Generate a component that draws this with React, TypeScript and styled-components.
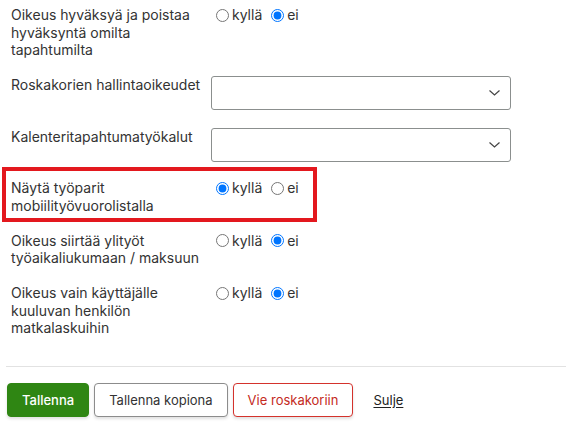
import React from 'react';
import styled, { createGlobalStyle, css } from 'styled-components';

const GlobalStyle = createGlobalStyle`
  html, body {
    margin: 0;
    padding: 0;
    background: #fff;
  }
  body {
    font-family: Inter, "Noto Sans", sans-serif;
    font-size: 14px;
    color: #333;
  }
`;

const Page = styled.div`
  width: 566px;
  height: 437px;
  overflow: hidden;
`;

const Fields = styled.div`
  display: flex;
  flex-direction: column;
  gap: 5.5px;
  padding-left: 6px;
`;

const Row = styled.div<{ $highlighted?: boolean }>`
  display: grid;
  grid-template-columns: 200px 300px;
  align-items: start;
  padding: 8px 5px 4px;
  line-height: 17.5px;

  &:first-child {
    padding-top: 6px;
  }

  ${({ $highlighted }) =>
    $highlighted &&
    css`
      width: 307px;
      box-sizing: border-box;
      outline: 4px solid #e3181e;
    `}
`;

const Label = styled.div`
  padding-right: 4px;
`;

const RadioGroup = styled.div`
  display: flex;
  align-items: center;
  white-space: pre;
  height: 17.5px;

  input {
    margin: 1px 3px 0 5px;
    width: 13px;
    height: 13px;
  }
`;

const SelectWrap = styled.div`
  position: relative;
  width: 300px;
`;

const Select = styled.select`
  appearance: none;
  display: block;
  width: 100%;
  height: 34px;
  box-sizing: border-box;
  border: 1px solid #8b8f8e;
  border-radius: 3px;
  background: #fff;
  font: inherit;
  padding: 0 30px 0 8px;
`;

const Chevron = styled.svg`
  position: absolute;
  right: 11px;
  top: 14px;
  pointer-events: none;
`;

const Divider = styled.hr`
  margin: 25px 0 0 6px;
  border: none;
  border-top: 1px solid #e2e2e2;
`;

const Actions = styled.div`
  display: flex;
  align-items: center;
  gap: 5px;
  padding: 16px 0 0 7px;
`;

const Button = styled.button<{ $variant: 'primary' | 'default' | 'danger' }>`
  height: 34px;
  box-sizing: border-box;
  padding: 0 14px;
  border-radius: 4px;
  font-family: Inter, "Noto Sans", sans-serif;
  font-size: 13px;
  cursor: pointer;
  border: 1px solid;
  box-shadow: 0 2px 3px rgba(0, 0, 0, 0.12);

  ${({ $variant }) =>
    $variant === 'primary'
      ? css`
          background: #2f8613;
          border-color: #2f8613;
          color: #fff;
          font-weight: 500;
        `
      : $variant === 'danger'
      ? css`
          background: #fff;
          border-color: #d4322c;
          color: #c42a22;
        `
      : css`
          background: #fff;
          border-color: #8c8c8c;
          color: #333;
        `}
`;

const LinkButton = styled.a`
  margin-left: 15px;
  color: #222;
  text-decoration: underline;
  text-underline-offset: 2px;
  font-size: 13px;
`;

type YesNoProps = { name: string; yes: boolean };

const YesNo: React.FC<YesNoProps> = ({ name, yes }) => (
  <RadioGroup>
    <input type="radio" name={name} defaultChecked={yes} />
    {'kyllä '}
    <input type="radio" name={name} defaultChecked={!yes} />
    {'ei'}
  </RadioGroup>
);

const Dropdown: React.FC = () => (
  <SelectWrap>
    <Select defaultValue="">
      <option value="" />
    </Select>
    <Chevron width="11" height="6" viewBox="0 0 11 6">
      <path d="M0.5 0.5 L5.5 5 L10.5 0.5" fill="none" stroke="#444" strokeWidth="1.2" />
    </Chevron>
  </SelectWrap>
);

const App: React.FC = () => (
  <Page>
    <GlobalStyle />
    <Fields>
      <Row>
        <Label>Oikeus hyväksyä ja poistaa hyväksyntä omilta tapahtumilta</Label>
        <YesNo name="approve" yes={false} />
      </Row>
      <Row>
        <Label>Roskakorien hallintaoikeudet</Label>
        <Dropdown />
      </Row>
      <Row>
        <Label>Kalenteritapahtumatyökalut</Label>
        <Dropdown />
      </Row>
      <Row $highlighted>
        <Label>Näytä työparit mobiilityövuorolistalla</Label>
        <YesNo name="pairs" yes />
      </Row>
      <Row>
        <Label>Oikeus siirtää ylityöt työaikaliukumaan / maksuun</Label>
        <YesNo name="overtime" yes={false} />
      </Row>
      <Row>
        <Label>Oikeus vain käyttäjälle kuuluvan henkilön matkalaskuihin</Label>
        <YesNo name="travel" yes={false} />
      </Row>
    </Fields>
    <Divider />
    <Actions>
      <Button $variant="primary">Tallenna</Button>
      <Button $variant="default">Tallenna kopiona</Button>
      <Button $variant="danger">Vie roskakoriin</Button>
      <LinkButton href="#">Sulje</LinkButton>
    </Actions>
  </Page>
);

export default App;
